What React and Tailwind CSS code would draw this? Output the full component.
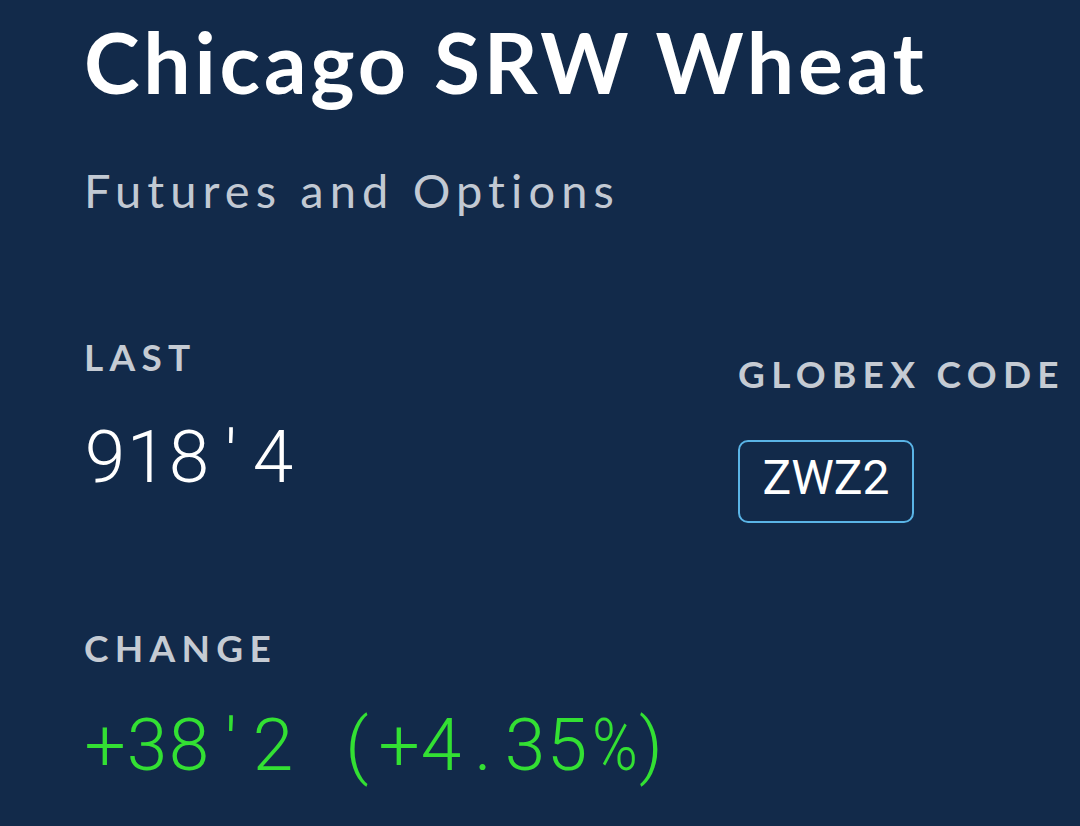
import React from 'react';

const Mono = ({ text, className = '' }) => (
  <div className={`flex leading-none font-light ${className}`} style={{ fontFamily: 'Roboto, sans-serif' }}>
    {text.split('').map((ch, i) => (
      <span key={i} className="inline-block w-[42px] text-center">
        {ch === ' ' ? '\u00a0' : ch === '%' ? <span className="inline-block scale-x-[0.85]">%</span> : ch}
      </span>
    ))}
  </div>
);

const Label = ({ children, className = '' }) => (
  <p className={`text-[37px] leading-none font-bold tracking-[0.17em] text-[#c5cbd3] whitespace-nowrap ${className}`}>
    {children}
  </p>
);

export default function App() {
  return (
    <div className="min-h-screen bg-[#122a4a] pl-[84px] pt-[20px] overflow-hidden" style={{ fontFamily: 'Lato, sans-serif' }}>
      <h1 className="text-[84px] leading-none font-bold tracking-[0.045em] text-white whitespace-nowrap">Chicago SRW Wheat</h1>
      <p className="mt-[63px] text-[47px] leading-none tracking-[0.13em] text-[#c2c9d3] whitespace-nowrap">Futures and Options</p>

      <div className="mt-[124px] flex items-start">
        <div className="w-[654px]">
          <Label>LAST</Label>
          <Mono text="918'4" className="mt-[46px] text-[73px] text-white" />
          <Label className="mt-[135px]">CHANGE</Label>
          <Mono text="+38'2 (+4.35%)" className="mt-[43px] text-[73px] text-[#33e033]" />
        </div>
        <div className="mt-[17px]">
          <Label>GLOBEX CODE</Label>
          <div className="mt-[48px] w-[176px] h-[83px] border-2 border-[#5ab4e6] rounded-[10px] flex justify-center pt-[12px]">
            <span className="text-[48px] leading-none text-white" style={{ fontFamily: 'Roboto, sans-serif' }}>ZWZ2</span>
          </div>
        </div>
      </div>
    </div>
  );
}
